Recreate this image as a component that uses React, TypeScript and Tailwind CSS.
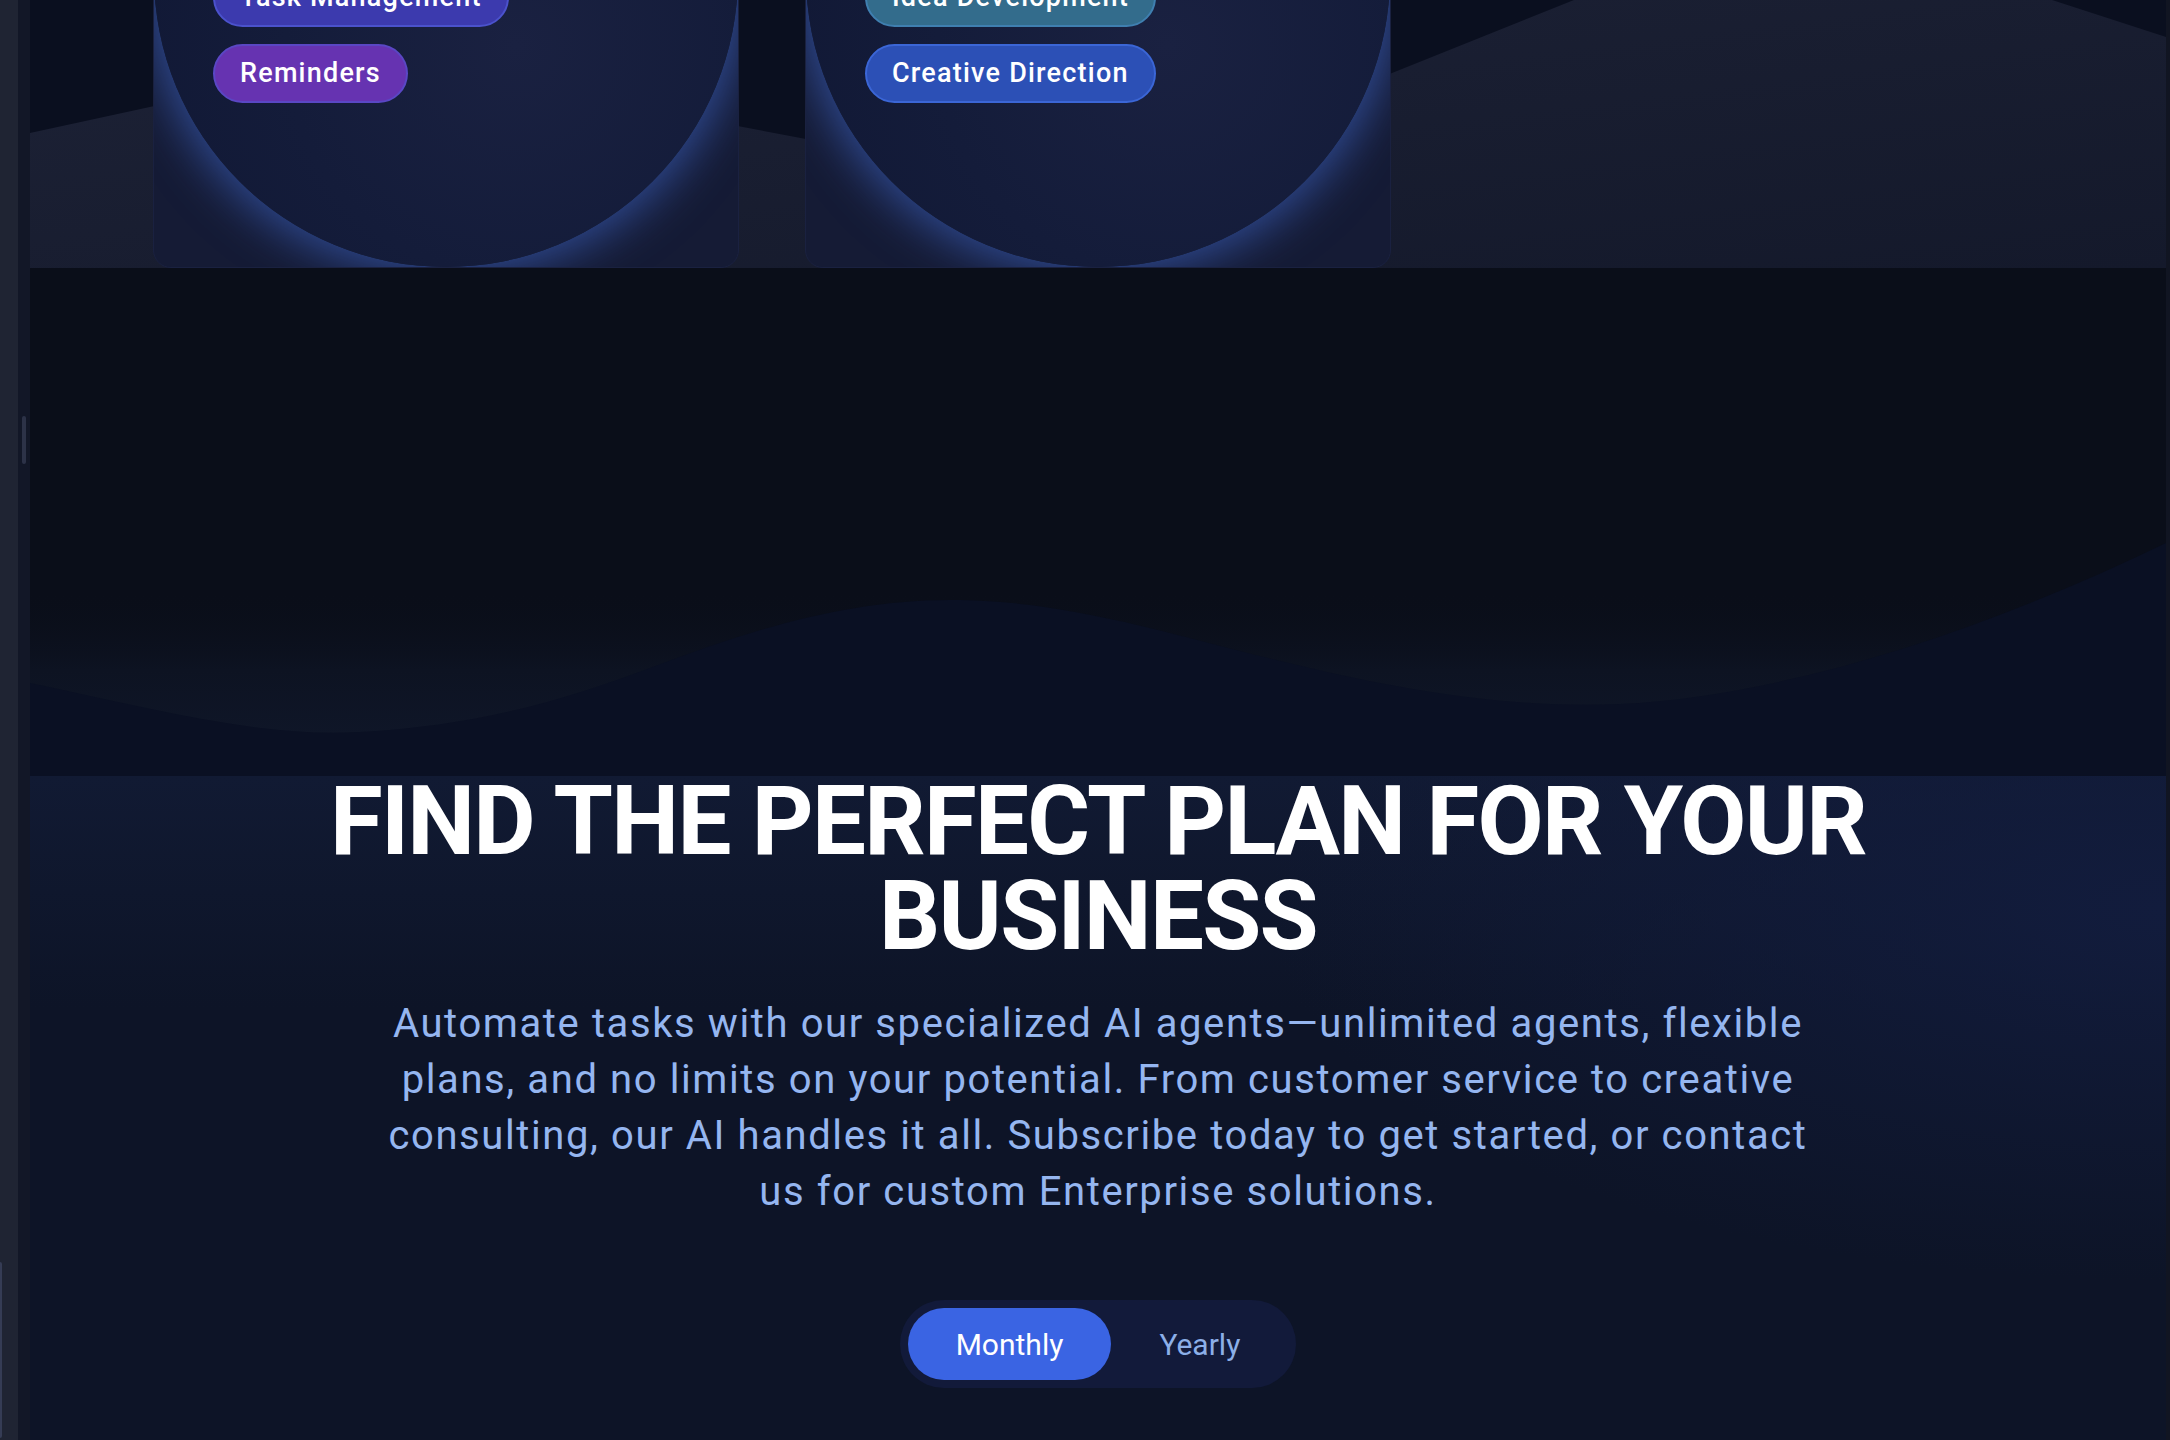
import React from "react";

type Pill = { label: string; className: string };

const cards: Pill[][] = [
  [
    { label: "Task Management", className: "bg-[#3c3aae] border-[#4b52cc]" },
    { label: "Reminders", className: "bg-[#6633b1] border-[#5a47c4]" },
  ],
  [
    { label: "Idea Development", className: "bg-[#336c8c] border-[#3f7fb0]" },
    { label: "Creative Direction", className: "bg-[#2c50b6] border-[#3b66d6]" },
  ],
];

const AgentCard = ({ pills }: { pills: Pill[] }) => {
  return (
    <div className="relative h-[586px] w-[586px] shrink-0 overflow-hidden rounded-b-[18px] border border-[#1a2140] bg-[#151b35]">
      <div className="absolute inset-0 rounded-full bg-[radial-gradient(circle_at_62%_62%,#1a2141_0%,#141c3a_45%,#0f1632_100%)] shadow-[0_0_46px_8px_rgba(58,94,186,0.72)]" />
      <div className="relative flex h-full flex-col items-start justify-end gap-[17px] pb-[164px] pl-[59px]">
        {pills.map((p) => (
          <span
            key={p.label}
            className={`flex h-[59px] items-center rounded-full border-2 px-[25px] text-[27px] font-medium tracking-[0.045em] text-white ${p.className}`}
          >
            {p.label}
          </span>
        ))}
      </div>
    </div>
  );
};

export default function App() {
  return (
    <div className="flex h-screen w-full overflow-hidden bg-[#0a0e19] font-['Roboto','Noto_Sans',sans-serif]">
      {/* left rail */}
      <div className="flex w-[18px] shrink-0 flex-col justify-end bg-[#1f2433]">
        <div className="mb-[2px] h-[176px] w-[2px] rounded-r bg-[#353c55]" />
      </div>
      <div className="w-[12px] shrink-0 bg-[#121727] pl-[4px] pt-[416px]">
        <div className="h-[48px] w-[4px] rounded-full bg-[#2c3247]" />
      </div>

      <main className="flex min-w-0 flex-1 flex-col">
        {/* agents strip (scrolled) */}
        <section className="relative h-[268px] shrink-0 overflow-hidden bg-[#0a0f1f]">
          <svg className="absolute inset-0 h-full w-full" viewBox="0 0 2136 268" preserveAspectRatio="none">
            <defs>
              <linearGradient id="mtn" x1="0" y1="0" x2="1" y2="1">
                <stop offset="0" stopColor="#1d2236" />
                <stop offset="1" stopColor="#14192b" />
              </linearGradient>
            </defs>
            <polygon points="0,133 346,58 1063,193 1544,0 2022,0 2136,37 2136,268 0,268" fill="url(#mtn)" />
          </svg>
          <div className="relative flex h-full items-end justify-center gap-[66px]">
            {cards.map((pills, i) => (
              <AgentCard key={i} pills={pills} />
            ))}
            <div className="w-[586px] shrink-0" />
          </div>
        </section>

        {/* wave divider */}
        <section className="relative h-[508px] shrink-0 bg-[#0a0e19]">
          <svg className="absolute inset-0 h-full w-full" viewBox="0 0 2136 508" preserveAspectRatio="none">
            <defs>
              <linearGradient id="haze" x1="0" y1="0" x2="0" y2="1">
                <stop offset="0" stopColor="#0a0e19" stopOpacity="0" />
                <stop offset="0.55" stopColor="#0d1322" />
                <stop offset="1" stopColor="#0f1628" />
              </linearGradient>
            </defs>
            <rect x="0" y="320" width="2136" height="150" fill="url(#haze)" />
            <path
              d="M0,415 C120,440 230,470 330,464 C450,458 540,430 620,400 C720,362 820,330 930,332 C1050,334 1150,370 1280,400 C1400,428 1500,440 1590,436 C1760,428 1960,360 2136,275 L2136,508 L0,508 Z"
              fill="#0a1023"
            />
          </svg>
        </section>

        {/* pricing intro */}
        <section className="flex flex-1 flex-col items-center bg-[#0d1427] bg-[radial-gradient(ellipse_60%_80%_at_100%_20%,#121c3d_0%,transparent_70%),linear-gradient(180deg,#111a33_0%,#0d1427_35%)] px-8">
          <h1 className="-mt-[2px] text-center text-[96px] font-bold uppercase leading-[95px] tracking-[-0.018em] text-white">
            Find the perfect plan for your
            <br />
            business
          </h1>
          <p className="mt-8 max-w-[1460px] text-center text-[40px] leading-[56px] tracking-[0.04em] text-[#95b6f0]">
            Automate tasks with our specialized AI agents—unlimited agents, flexible plans, and no limits on your
            potential. From customer service to creative consulting, our AI handles it all. Subscribe today to get
            started, or contact us for custom Enterprise solutions.
          </p>

          <div className="mt-20 flex items-center rounded-full bg-[#121a3a] p-2">
            <button className="h-[72px] rounded-full bg-[#3a64e3] px-12 text-[30px] text-white">Monthly</button>
            <button className="h-[72px] rounded-full px-12 text-[30px] text-[#8cafe8]">Yearly</button>
          </div>
        </section>
      </main>
      <div className="w-[4px] shrink-0 bg-[#111522]" />
    </div>
  );
}
